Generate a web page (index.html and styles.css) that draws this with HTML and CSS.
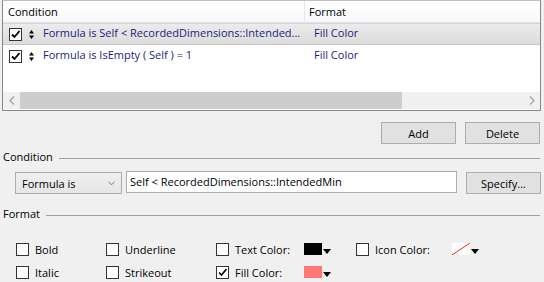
FILE: index.html
```html
<!DOCTYPE html>
<html>
<head>
<meta charset="utf-8">
<link rel="stylesheet" href="styles.css">
</head>
<body>
<div class="grid">
  <div class="grid-head">
    <div class="hcell hcond">Condition</div>
    <div class="hcell hfmt">Format</div>
  </div>
  <div class="grid-body">
    <div class="row selected">
      <div class="cell ccond">
        <span class="cb checked"><svg viewBox="0 0 11 11" width="11" height="11"><path d="M2 5.5 L4.5 8 L9.5 2" fill="none" stroke="#000" stroke-width="1.8"/></svg></span>
        <svg class="sort" viewBox="0 0 5 9" width="5" height="9"><path d="M2.5 0 L5 3.5 L0 3.5 Z M0 5.5 L5 5.5 L2.5 9 Z" fill="#000"/></svg>
        <span class="ctext">Formula is Self &lt; RecordedDimensions::Intended...</span>
      </div>
      <div class="cell cfmt"><span class="ftext">Fill Color</span></div>
    </div>
    <div class="row">
      <div class="cell ccond">
        <span class="cb checked"><svg viewBox="0 0 11 11" width="11" height="11"><path d="M2 5.5 L4.5 8 L9.5 2" fill="none" stroke="#000" stroke-width="1.8"/></svg></span>
        <svg class="sort" viewBox="0 0 5 9" width="5" height="9"><path d="M2.5 0 L5 3.5 L0 3.5 Z M0 5.5 L5 5.5 L2.5 9 Z" fill="#000"/></svg>
        <span class="ctext">Formula is IsEmpty ( Self ) = 1</span>
      </div>
      <div class="cell cfmt"><span class="ftext">Fill Color</span></div>
    </div>
  </div>
  <div class="hscroll">
    <div class="sbtn"><svg viewBox="0 0 6 9" width="6" height="9"><path d="M5 0.5 L1 4.5 L5 8.5" fill="none" stroke="#a0a0a0" stroke-width="1.2"/></svg></div>
    <div class="thumb"></div>
    <div class="track"></div>
    <div class="sbtn"><svg viewBox="0 0 6 9" width="6" height="9"><path d="M1 0.5 L5 4.5 L1 8.5" fill="none" stroke="#a0a0a0" stroke-width="1.2"/></svg></div>
  </div>
</div>

<div class="actions">
  <button class="btn">Add</button>
  <button class="btn">Delete</button>
</div>

<div class="section sec-cond">
  <span class="sec-title">Condition</span>
  <span class="sec-line"></span>
</div>

<div class="cond-row">
  <div class="select">
    <span>Formula is</span>
    <svg viewBox="0 0 7 5" width="7" height="5"><path d="M0.5 0.8 L3.5 3.8 L6.5 0.8" fill="none" stroke="#707070" stroke-width="1"/></svg>
  </div>
  <div class="input">Self &lt; RecordedDimensions::IntendedMin</div>
  <button class="btn specify">Specify...</button>
</div>

<div class="section sec-fmt">
  <span class="sec-title">Format</span>
  <span class="sec-line"></span>
</div>

<div class="opts">
  <label class="opt"><span class="box"></span>Bold</label>
  <label class="opt"><span class="box"></span>Underline</label>
  <label class="opt"><span class="box"></span><span class="olbl w-text">Text Color:</span><span class="swatch black"></span><span class="tri"></span></label>
  <label class="opt"><span class="box"></span><span class="olbl w-icon">Icon Color:</span><span class="swatch none"><svg viewBox="0 0 18 12" width="18" height="12"><path d="M0 12 L18 0" stroke="#ff2020" stroke-width="1"/></svg></span><span class="tri"></span></label>
  <label class="opt"><span class="box"></span>Italic</label>
  <label class="opt"><span class="box"></span>Strikeout</label>
  <label class="opt"><span class="box"><svg viewBox="0 0 11 11" width="11" height="11"><path d="M2 5.5 L4.5 8 L9.5 2" fill="none" stroke="#000" stroke-width="1.6"/></svg></span><span class="olbl w-text">Fill Color:</span><span class="swatch pink"></span><span class="tri"></span></label>
</div>
</body>
</html>
```

FILE: styles.css
```css
* { box-sizing: border-box; }
html, body { margin: 0; padding: 0; }
body {
  width: 544px;
  height: 282px;
  overflow: hidden;
  background: #f0f0f0;
  font-family: "Open Sans", "Noto Sans", sans-serif;
  font-size: 11px;
  color: #000;
}

.grid {
  margin: 0 3px 0 2px;
  height: 111px;
  border: 1px solid #828790;
  border-top-color: #c0c0c0;
  background: #fff;
  display: flex;
  flex-direction: column;
}
.grid-head {
  display: flex;
  height: 22px;
  border-bottom: 1px solid #e5e5e5;
  background: linear-gradient(#ffffff, #f7f8fa);
}
.hcell {
  line-height: 21px;
}
.hcond {
  width: 302px;
  padding-left: 5px;
  border-right: 1px solid #e5e5e5;
}
.hfmt { padding-left: 4px; flex: 1; }

.grid-body { flex: 1; }
.row {
  display: flex;
  height: 22px;
  align-items: center;
  border-top: 1px solid transparent;
  border-bottom: 1px solid transparent;
  color: #1c1c7c;
}
.row.selected {
  background: linear-gradient(#ebebeb, #dcdcdc);
  border-top-color: #d4d4d4;
  border-bottom-color: #c6c6c6;
}
.cell { display: flex; align-items: center; }
.ccond { width: 302px; padding-left: 6px; overflow: hidden; }
.cfmt { padding-left: 9px; }
.cb {
  width: 13px;
  height: 13px;
  border: 1px solid #333;
  background: #fff;
  display: inline-flex;
  align-items: center;
  justify-content: center;
  flex: none;
}
.sort { margin-left: 7px; flex: none; }
.ctext { margin-left: 9px; white-space: nowrap; margin-bottom: 3px; }
.ftext { margin-bottom: 3px; }

.hscroll {
  display: flex;
  height: 17px;
  margin-bottom: 1px;
  background: #f0f0f0;
}
.sbtn {
  width: 17px;
  display: flex;
  align-items: center;
  justify-content: center;
}
.thumb { width: 382px; background: #cdcdcd; }
.track { flex: 1; }

.actions {
  display: flex;
  justify-content: flex-end;
  gap: 9px;
  margin: 11px 4px 0 0;
}
.btn {
  width: 75px;
  height: 22px;
  padding: 0;
  border: 1px solid #adadad;
  background: #e1e1e1;
  font: inherit;
  color: #000;
}

.section {
  display: flex;
  align-items: center;
  margin-right: 4px;
}
.sec-title { padding-left: 3px; line-height: 16px; }
.sec-line {
  flex: 1;
  height: 1px;
  background: #a0a0a0;
  margin-left: 6px;
  margin-top: 2px;
}
.sec-cond { margin-top: 5px; }
.sec-fmt { margin-top: 12px; }

.cond-row {
  display: flex;
  align-items: flex-start;
  margin-top: 6px;
  padding-left: 15px;
}
.select {
  width: 107px;
  height: 22px;
  margin-top: 1px;
  border: 1px solid #acacac;
  background: linear-gradient(#efefef, #e5e5e5);
  display: flex;
  align-items: center;
  justify-content: space-between;
  padding: 0 6px 0 6px;
}
.input {
  width: 331px;
  height: 22px;
  margin-left: 4px;
  border: 1px solid #abadb3;
  background: #fff;
  padding-left: 3px;
  line-height: 20px;
}
.specify { margin-left: 9px; margin-top: 1px; }

.opts {
  display: grid;
  grid-template-columns: 90px 110px 140px auto;
  row-gap: 9px;
  margin-top: 20px;
  padding-left: 16px;
}
.opt {
  display: flex;
  align-items: center;
  height: 14px;
  white-space: nowrap;
}
.box {
  width: 13px;
  height: 13px;
  border: 1px solid #333;
  background: #fff;
  margin-right: 6px;
  display: inline-flex;
  align-items: center;
  justify-content: center;
  flex: none;
}
.olbl { display: inline-block; }
.w-text { width: 69px; }
.w-icon { width: 77px; }
.swatch {
  width: 18px;
  height: 12px;
  display: inline-block;
}
.swatch.black { background: #000; }
.swatch.pink { background: #ff7777; }
.swatch.none { background: #fff; display: inline-flex; }
.tri {
  width: 0;
  height: 0;
  margin-left: 1px;
  margin-top: 4px;
  border-left: 4px solid transparent;
  border-right: 4px solid transparent;
  border-top: 5px solid #000;
}
```
